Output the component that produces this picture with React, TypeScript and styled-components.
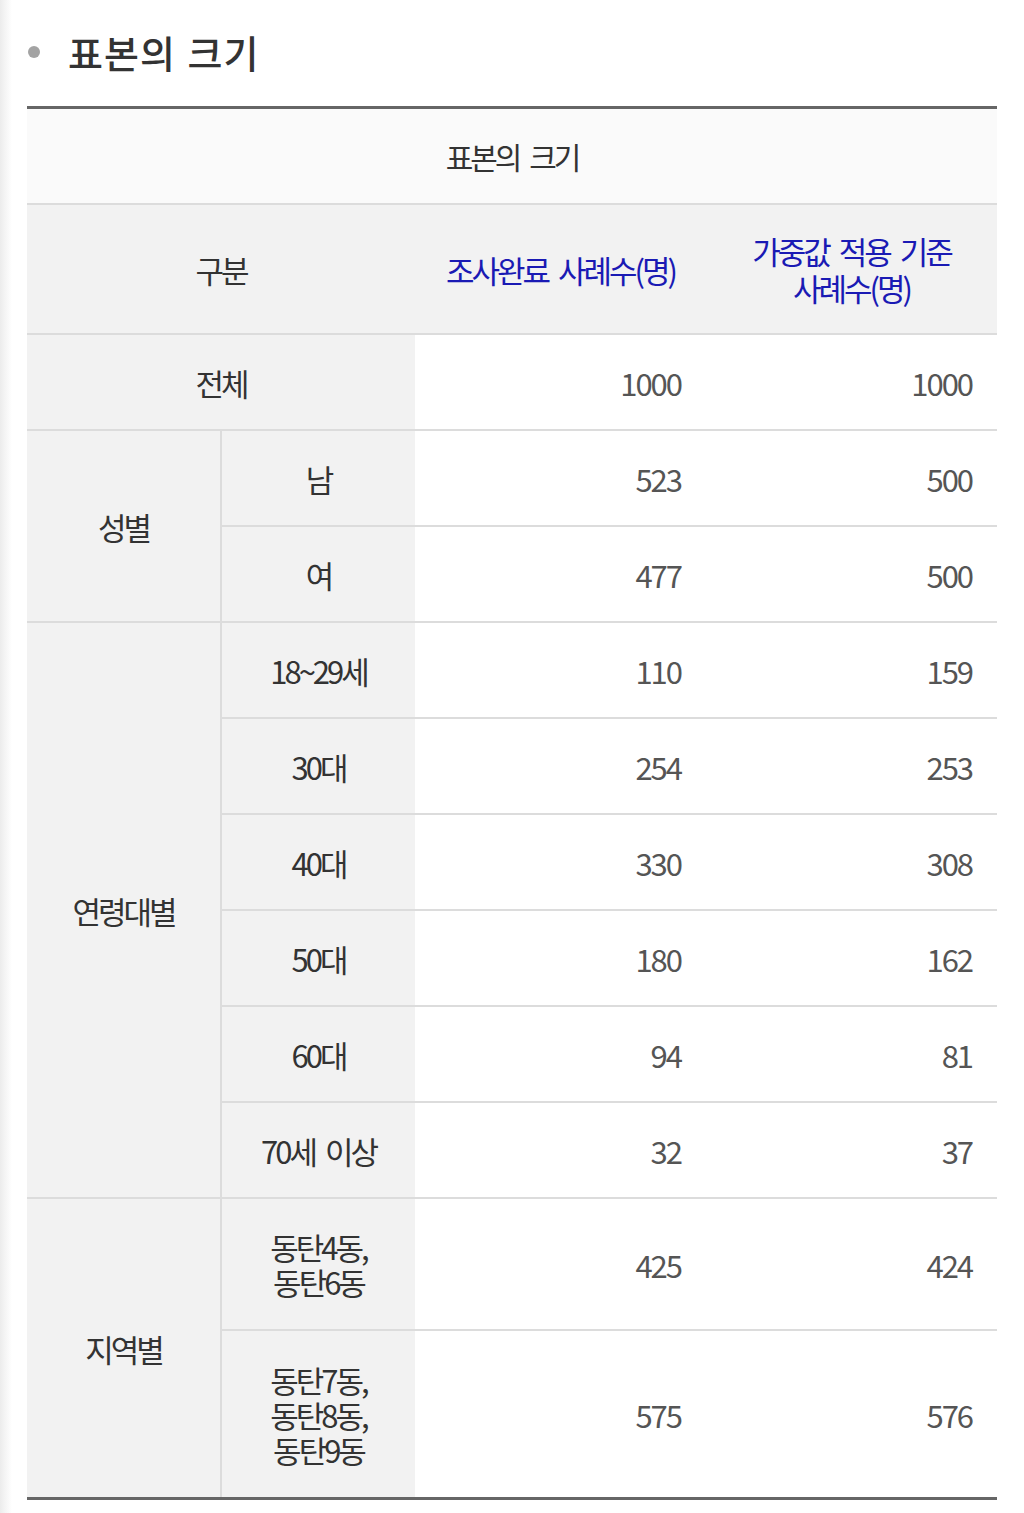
import React from 'react';
import styled, { createGlobalStyle } from 'styled-components';

interface IRow {
  group?: { label: string; span: number };
  label: string;
  done: number;
  weighted: number;
  tall?: number;
}

const rows: IRow[] = [
  { group: { label: '성별', span: 2 }, label: '남', done: 523, weighted: 500 },
  { label: '여', done: 477, weighted: 500 },
  { group: { label: '연령대별', span: 6 }, label: '18~29세', done: 110, weighted: 159 },
  { label: '30대', done: 254, weighted: 253 },
  { label: '40대', done: 330, weighted: 308 },
  { label: '50대', done: 180, weighted: 162 },
  { label: '60대', done: 94, weighted: 81 },
  { label: '70세 이상', done: 32, weighted: 37 },
  { group: { label: '지역별', span: 2 }, label: '동탄4동,\n동탄6동', done: 425, weighted: 424, tall: 130 },
  { label: '동탄7동,\n동탄8동,\n동탄9동', done: 575, weighted: 576, tall: 166 },
];

const App: React.FC = () => {
  return (
    <>
      <GlobalStyle />
      <Page>
        <Heading>표본의 크기</Heading>
        <SampleTable>
          <colgroup>
            <col style={{ width: 194 }} />
            <col style={{ width: 194 }} />
            <col style={{ width: 291 }} />
            <col style={{ width: 291 }} />
          </colgroup>
          <thead>
            <tr>
              <Caption colSpan={4}>표본의 크기</Caption>
            </tr>
            <tr>
              <HeadCell colSpan={2}>구분</HeadCell>
              <HeadCell $accent>조사완료 사례수(명)</HeadCell>
              <HeadCell $accent>
                가중값 적용 기준
                <br />
                사례수(명)
              </HeadCell>
            </tr>
          </thead>
          <tbody>
            <tr>
              <LabelCell colSpan={2} $height={94}>
                전체
              </LabelCell>
              <NumCell>1000</NumCell>
              <NumCell>1000</NumCell>
            </tr>
            {rows.map((row) => (
              <tr key={row.label}>
                {row.group && (
                  <GroupCell rowSpan={row.group.span}>{row.group.label}</GroupCell>
                )}
                <LabelCell $height={row.tall ?? 94}>{row.label}</LabelCell>
                <NumCell>{row.done}</NumCell>
                <NumCell>{row.weighted}</NumCell>
              </tr>
            ))}
          </tbody>
        </SampleTable>
      </Page>
    </>
  );
};

export default App;

const GlobalStyle = createGlobalStyle`
  html, body {
    margin: 0;
    padding: 0;
  }
  body {
    background: linear-gradient(to right, #ececec 0, #f6f6f6 6px, #ffffff 12px) #ffffff;
    font-family: "Noto Sans CJK KR", "Noto Sans", sans-serif;
    color: #333333;
  }
`;
const Page = styled.div`
  width: 970px;
  padding: 24px 27px 13px;
`;
const Heading = styled.h2`
  position: relative;
  margin: 0 0 26px;
  padding-left: 41px;
  font-size: 38px;
  font-weight: 500;
  line-height: 56px;
  color: #333333;
  letter-spacing: 1px;
  word-spacing: 2px;

  &::before {
    content: '';
    position: absolute;
    left: 1px;
    top: 50%;
    transform: translateY(-50%);
    width: 12px;
    height: 12px;
    border-radius: 50%;
    background: #a3a3a3;
  }
`;
const SampleTable = styled.table`
  width: 970px;
  table-layout: fixed;
  border-collapse: collapse;
  border-top: 3px solid #666666;
  border-bottom: 3px solid #666666;
  font-size: 31px;
  letter-spacing: -3px;
  word-spacing: 6px;

  td,
  th {
    padding: 0;
    border-bottom: 2px solid #dcdcdc;
  }
  tbody tr:last-child td {
    border-bottom: none;
  }
`;
const Caption = styled.th`
  height: 94px;
  background: #fafafa;
  font-weight: 400;
  font-size: 30px;
  color: #333333;
  text-align: center;
`;
const HeadCell = styled.th<{ $accent?: boolean }>`
  height: 128px;
  background: #f2f2f2;
  font-weight: 400;
  line-height: 37px;
  text-align: center;
  color: ${({ $accent }) => ($accent ? '#1a1ab4' : '#333333')};
`;
const GroupCell = styled.td`
  background: #f2f2f2;
  border-right: 2px solid #dcdcdc;
  text-align: center;
  color: #333333;
`;
const LabelCell = styled.td<{ $height: number }>`
  height: ${({ $height }) => $height}px;
  background: #f2f2f2;
  text-align: center;
  line-height: 35px;
  white-space: pre-line;
  color: #333333;
`;
const NumCell = styled.td`
  text-align: right;
  padding-right: 25px !important;
  letter-spacing: -2px;
  color: #555555;
  background: #ffffff;
`;
